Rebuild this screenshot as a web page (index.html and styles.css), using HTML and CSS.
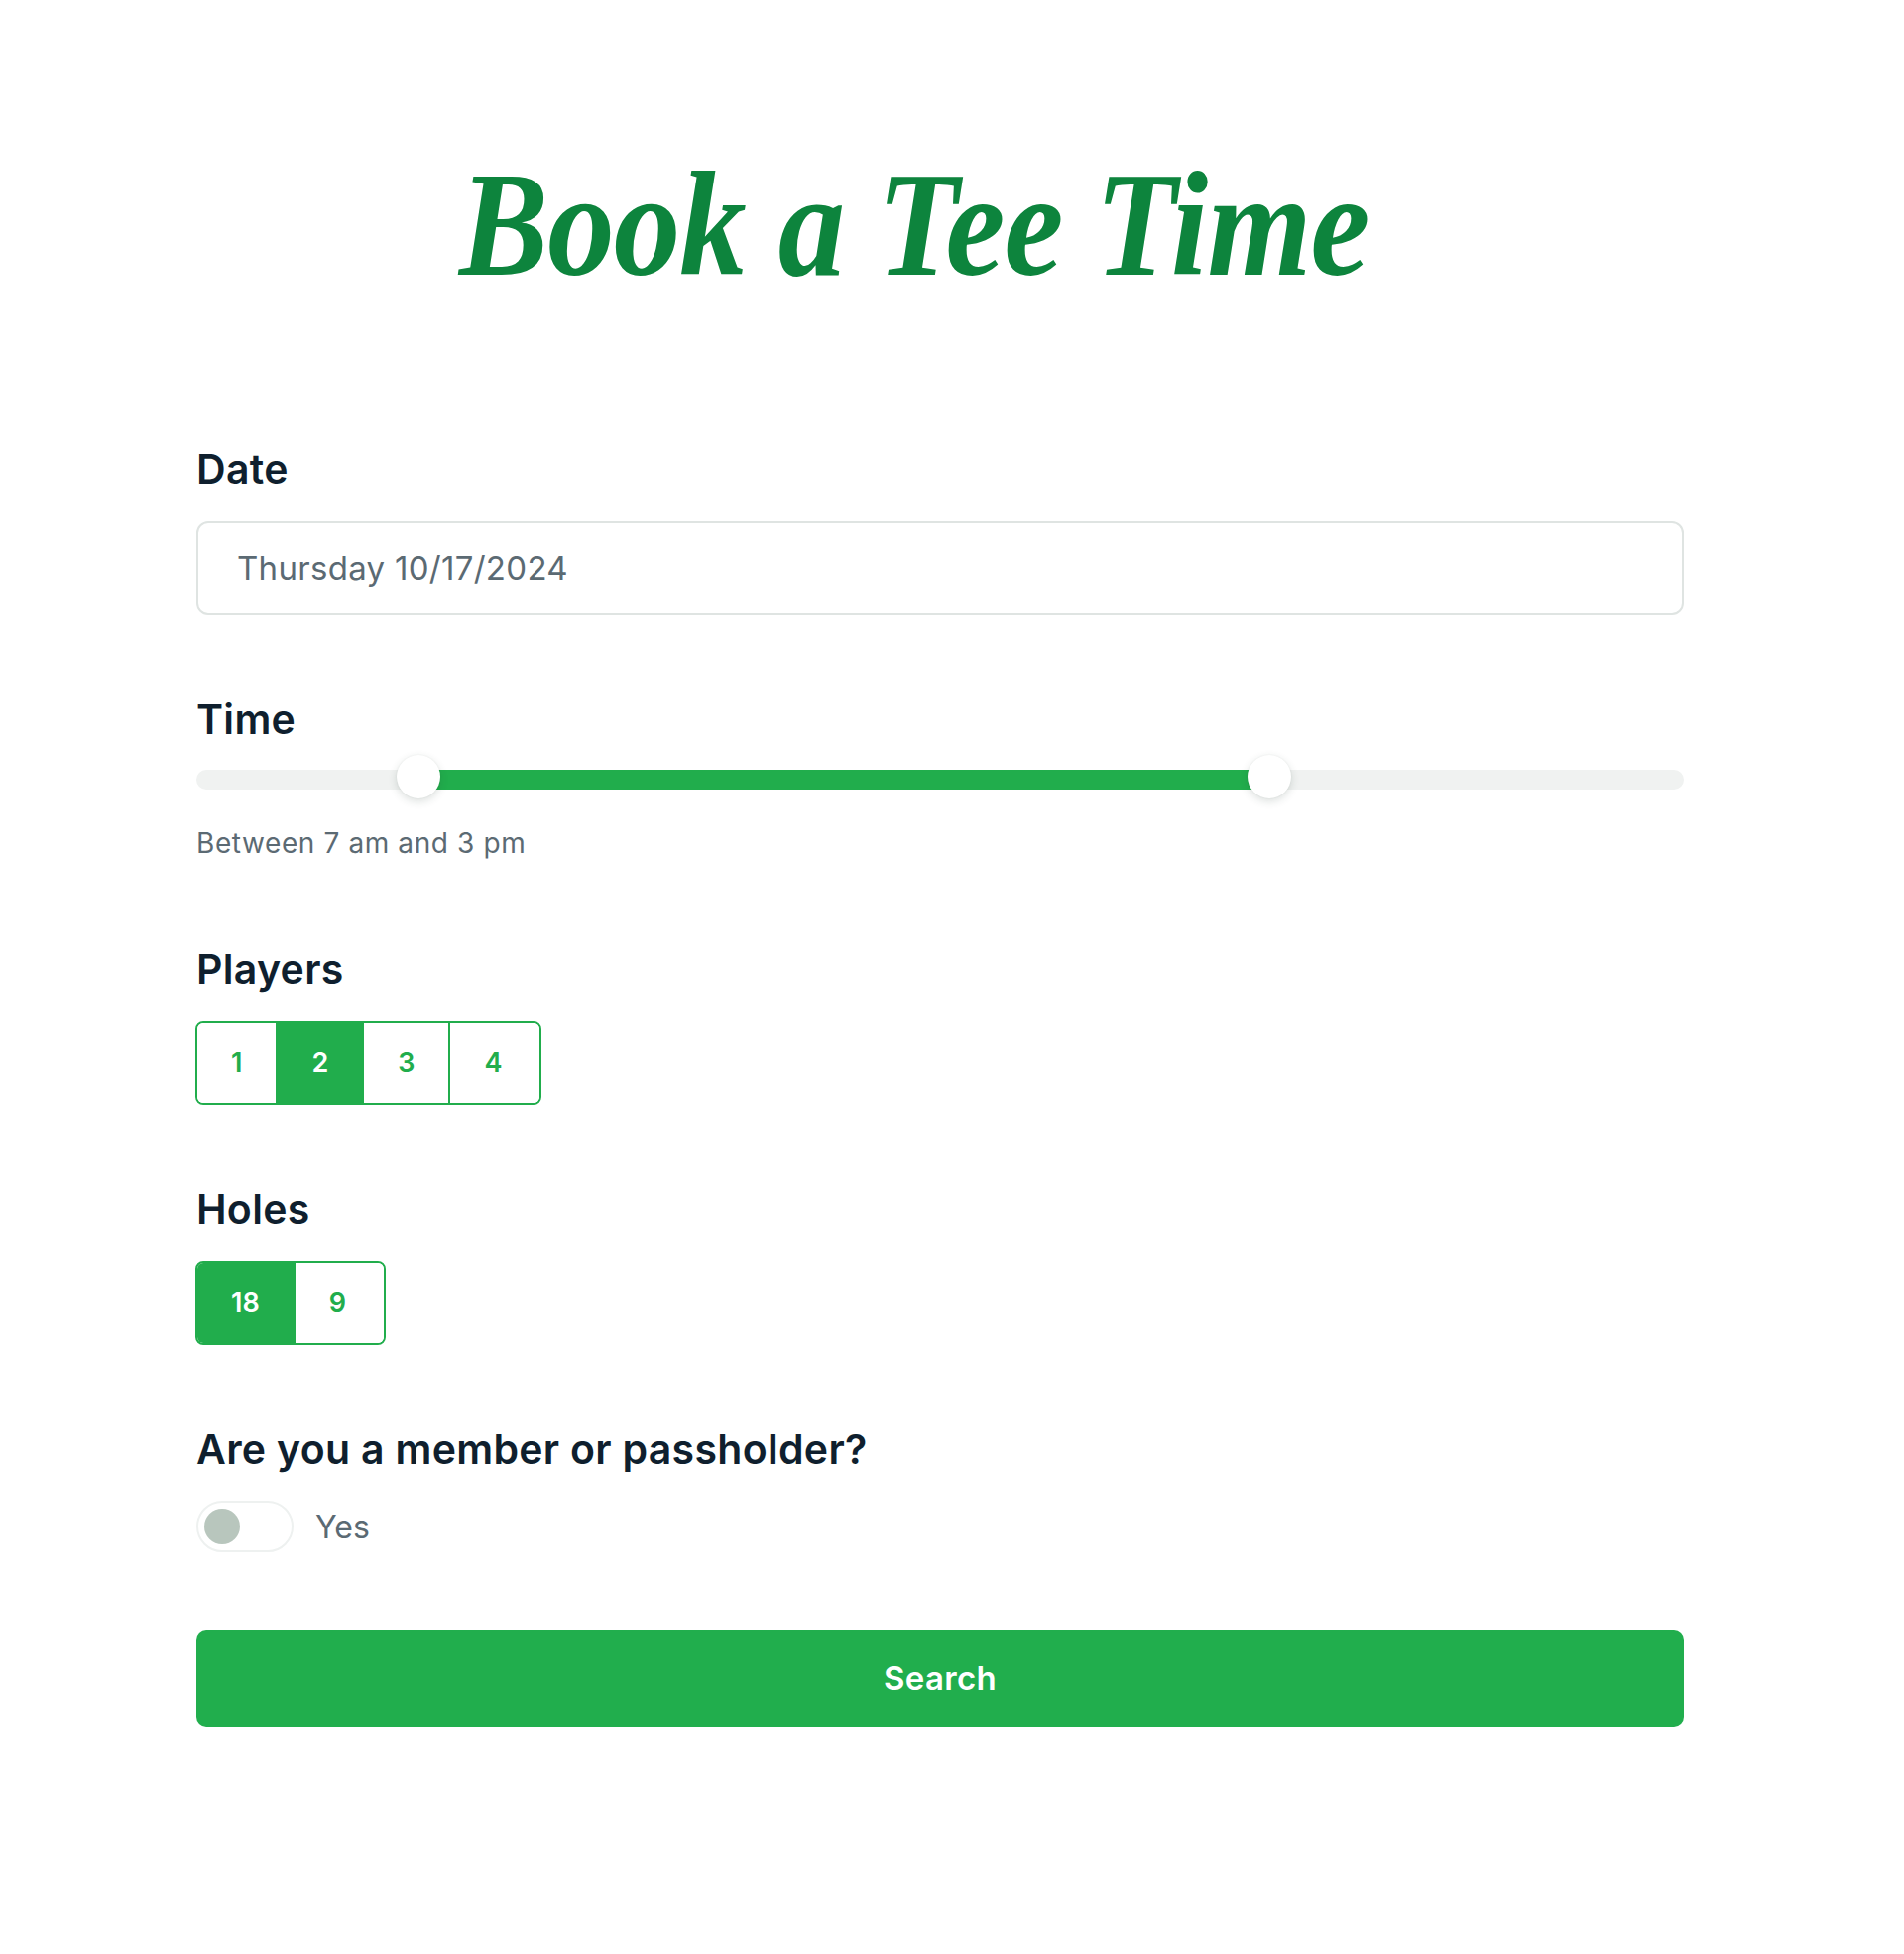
FILE: index.html
```html
<!DOCTYPE html>
<html lang="en">
<head>
<meta charset="utf-8">
<title>Book a Tee Time</title>
<link rel="stylesheet" href="styles.css">
</head>
<body>
<main class="page">
  <header class="title-wrap">
    <h1 class="title">Book a Tee Time</h1>
  </header>

  <section class="field">
    <div class="label">Date</div>
    <div class="input">Thursday 10/17/2024</div>
  </section>

  <section class="field field-time">
    <div class="label">Time</div>
    <div class="slider">
      <div class="track"></div>
      <div class="fill" style="left: 14.93%; width: 57.2%;"></div>
      <div class="knob" style="left: 14.93%;"></div>
      <div class="knob" style="left: 72.13%;"></div>
    </div>
    <div class="hint">Between 7 am and 3 pm</div>
  </section>

  <section class="field">
    <div class="label">Players</div>
    <div class="seg">
      <button class="seg-btn">1</button>
      <button class="seg-btn is-on">2</button>
      <button class="seg-btn">3</button>
      <button class="seg-btn">4</button>
    </div>
  </section>

  <section class="field">
    <div class="label">Holes</div>
    <div class="seg">
      <button class="seg-btn is-on">18</button>
      <button class="seg-btn">9</button>
    </div>
  </section>

  <section class="field field-last">
    <div class="label">Are you a member or passholder?</div>
    <div class="toggle-row">
      <span class="toggle"><span class="toggle-knob"></span></span>
      <span class="toggle-text">Yes</span>
    </div>
  </section>

  <button class="search">Search</button>
</main>
</body>
</html>
```

FILE: styles.css
```css
html, body {
  margin: 0;
  padding: 0;
  background: #ffffff;
}

body {
  font-family: Inter, "Noto Sans", sans-serif;
  color: #0f1f2e;
}

.page {
  width: 1500px;
  margin-left: 198px;
  padding-top: 136px;
  padding-bottom: 200px;
}

.title-wrap {
  padding-left: 265px;
  height: 180px;
  margin-bottom: 134px;
}

.title {
  display: inline-block;
  margin: 0;
  font-family: "Liberation Serif", "Times New Roman", serif;
  font-style: italic;
  font-weight: 700;
  font-size: 150px;
  line-height: 180px;
  color: #0d843d;
  letter-spacing: -1px;
  white-space: nowrap;
  transform: scaleX(0.9);
  transform-origin: left center;
}

.field {
  margin-bottom: 82px;
}

.field-time {
  margin-bottom: 88px;
}

.field-last {
  margin-bottom: 78px;
}

.label {
  font-size: 41px;
  line-height: 46px;
  font-weight: 600;
  letter-spacing: 0.3px;
  color: #0f1f2e;
  margin-bottom: 29px;
}

.input {
  box-sizing: border-box;
  height: 95px;
  border: 2px solid #dfe4e2;
  border-radius: 12px;
  padding-left: 39px;
  display: flex;
  align-items: center;
  font-size: 33px;
  letter-spacing: 0.3px;
  color: #5b6a73;
}

.slider {
  position: relative;
  height: 44px;
  margin-top: -13px;
}

.track {
  position: absolute;
  left: 0;
  right: 0;
  top: 12px;
  height: 20px;
  border-radius: 10px;
  background: #f0f2f1;
}

.fill {
  position: absolute;
  top: 12px;
  height: 20px;
  background: #21ad4c;
}

.knob {
  position: absolute;
  top: 0;
  width: 44px;
  height: 44px;
  margin-left: -22px;
  margin-top: -3px;
  border-radius: 50%;
  background: #ffffff;
  box-shadow: 0 3px 8px rgba(40, 60, 50, 0.16), 0 0 2px rgba(40, 60, 50, 0.08);
}

.hint {
  margin-top: 26px;
  font-size: 28px;
  line-height: 32px;
  letter-spacing: 0.6px;
  color: #5b6a73;
}

.seg {
  display: inline-flex;
  height: 85px;
  box-sizing: border-box;
  border: 2px solid #21ad4c;
  border-radius: 8px;
  overflow: hidden;
  margin-left: -1px;
}

.seg-btn {
  border: 0;
  border-left: 2px solid #21ad4c;
  background: #ffffff;
  color: #21ad4c;
  font-family: Inter, "Noto Sans", sans-serif;
  font-size: 27px;
  font-weight: 600;
  padding: 0 34px;
  margin: 0;
  cursor: pointer;
}

.seg-btn:first-child {
  border-left: 0;
}

.seg-btn:last-child {
  padding-right: 38px;
}

.seg-btn.is-on {
  background: #21ad4c;
  color: #ffffff;
}

.toggle-row {
  display: flex;
  align-items: center;
  gap: 22px;
  margin-top: 2px;
}

.toggle {
  box-sizing: border-box;
  width: 98px;
  height: 52px;
  border: 2px solid #eef1f0;
  border-radius: 26px;
  background: #ffffff;
  display: flex;
  align-items: center;
  padding-left: 6px;
}

.toggle-knob {
  width: 36px;
  height: 36px;
  border-radius: 50%;
  background: #b8c6bd;
}

.toggle-text {
  font-size: 32px;
  color: #5b6a73;
}

.search {
  display: block;
  width: 100%;
  height: 98px;
  border: 0;
  border-radius: 10px;
  background: #21ae4d;
  color: #ffffff;
  font-family: Inter, "Noto Sans", sans-serif;
  font-size: 33px;
  font-weight: 600;
  letter-spacing: 0.3px;
  cursor: pointer;
}
```
